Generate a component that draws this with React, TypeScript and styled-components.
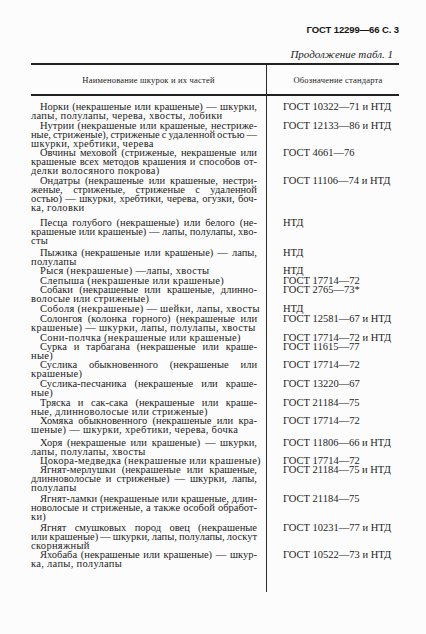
import styled, { createGlobalStyle } from "styled-components";

type Entry = { lines: string[]; code: string; gap: number };

// gap = extra space above the entry, taken from the scan
const entries: Entry[] = [
  {
    gap: 6,
    code: "ГОСТ 10322—71 и НТД",
    lines: ["Норки (некрашеные или крашеные) — шкурки,", "лапы, полулапы, черева, хвосты, лобики"],
  },
  {
    gap: 1,
    code: "ГОСТ 12133—86 и НТД",
    lines: [
      "Нутрии (некрашеные или крашеные, нестриже-",
      "ные, стриженые), стриженые с удаленной остью —",
      "шкурки, хребтики, черева",
    ],
  },
  {
    gap: 0,
    code: "ГОСТ 4661—76",
    lines: [
      "Овчины меховой (стриженые, некрашеные или",
      "крашеные всех методов крашения и способов от-",
      "делки волосяного покрова)",
    ],
  },
  {
    gap: 1,
    code: "ГОСТ 11106—74 и НТД",
    lines: [
      "Ондатры (некрашеные или крашеные, нестри-",
      "женые, стриженые, стриженые с удаленной",
      "остью) — шкурки, хребтики, черева, огузки, боч-",
      "ка, головки",
    ],
  },
  {
    gap: 6,
    code: "НТД",
    lines: [
      "Песца голубого (некрашеные) или белого (не-",
      "крашеные или крашеные) — лапы, полулапы, хво-",
      "сты",
    ],
  },
  {
    gap: 3,
    code: "НТД",
    lines: ["Пыжика (некрашеные или крашеные) — лапы,", "полулапы"],
  },
  { gap: 0, code: "НТД", lines: ["Рыся (некрашеные) —лапы, хвосты"] },
  { gap: 1, code: "ГОСТ 17714—72", lines: ["Слепыша (некрашеные или крашеные)"] },
  {
    gap: 0,
    code: "ГОСТ 2765—73*",
    lines: ["Собаки (некрашеные или крашеные, длинно-", "волосые или стриженые)"],
  },
  { gap: 1, code: "НТД", lines: ["Соболя (некрашеные) — шейки, лапы, хвосты"] },
  {
    gap: 1,
    code: "ГОСТ 12581—67 и НТД",
    lines: ["Солонгоя (колонка горного) (некрашеные или", "крашеные) — шкурки, лапы, полулапы, хвосты"],
  },
  { gap: 1, code: "ГОСТ 17714—72 и НТД", lines: ["Сони-полчка (некрашеные или крашеные)"] },
  {
    gap: 0,
    code: "ГОСТ 11615—77",
    lines: ["Сурка и тарбагана (некрашеные или краше-", "ные)"],
  },
  {
    gap: 0,
    code: "ГОСТ 17714—72",
    lines: ["Суслика обыкновенного (некрашеные или", "крашеные)"],
  },
  {
    gap: 1,
    code: "ГОСТ 13220—67",
    lines: ["Суслика-песчаника (некрашеные или краше-", "ные)"],
  },
  {
    gap: 1,
    code: "ГОСТ 21184—75",
    lines: ["Тряска и сак-сака (некрашеные или краше-", "ные, длинноволосые или стриженые)"],
  },
  {
    gap: 0,
    code: "ГОСТ 17714—72",
    lines: ["Хомяка обыкновенного (некрашеные или кра-", "шеные) — шкурки, хребтики, черева, бочка"],
  },
  {
    gap: 4,
    code: "ГОСТ 11806—66 и НТД",
    lines: ["Хоря (некрашеные или крашеные) — шкурки,", "лапы, полулапы, хвосты"],
  },
  { gap: 0, code: "ГОСТ 17714—72", lines: ["Цокора-медведка (некрашеные или крашеные)"] },
  {
    gap: 0,
    code: "ГОСТ 21184—75 и НТД",
    lines: [
      "Ягнят-мерлушки (некрашеные или крашеные,",
      "длинноволосые и стриженые) — шкурки, лапы,",
      "полулапы",
    ],
  },
  {
    gap: 2,
    code: "ГОСТ 21184—75",
    lines: [
      "Ягнят-ламки (некрашеные или крашеные, длин-",
      "новолосые и стриженые, а также особой обработ-",
      "ки)",
    ],
  },
  {
    gap: 2,
    code: "ГОСТ 10231—77 и НТД",
    lines: [
      "Ягнят смушковых пород овец (некрашеные",
      "или крашеные) — шкурки, лапы, полулапы, лоскут",
      "скорняжный",
    ],
  },
  {
    gap: 0,
    code: "ГОСТ 10522—73 и НТД",
    lines: ["Яхобаба (некрашеные или крашеные) — шкур-", "ка, лапы, полулапы"],
  },
];

export default function App() {
  return (
    <>
      <GlobalStyle />
      <Page>
        <RunningHead>ГОСТ 12299—66 С. 3</RunningHead>
        <Caption>Продолжение табл. 1</Caption>
        <Table>
          <HeadCell $first>Наименование шкурок и их частей</HeadCell>
          <HeadCell>Обозначение стандарта</HeadCell>
          {entries.map((entry, i) => (
            <Row key={i} $gap={entry.gap} $tail={i === entries.length - 1 ? 24 : 0}>
              <NameCell>
                {entry.lines.map((line, j) => (
                  <Line key={j} $lead={j === 0} $last={j === entry.lines.length - 1}>
                    {line}
                  </Line>
                ))}
              </NameCell>
              <CodeCell>{entry.code}</CodeCell>
            </Row>
          ))}
        </Table>
      </Page>
    </>
  );
}

const GlobalStyle = createGlobalStyle`
  html, body {
    margin: 0;
    background: #fcfcfc;
  }
  body {
    color: #1c1c1c;
    font-family: "Liberation Serif", "DejaVu Serif", serif;
  }
`;

const Page = styled.div`
  width: 426px;
  height: 634px;
  box-sizing: border-box;
  padding: 22px 27px 0 31px;
`;

const RunningHead = styled.div`
  text-align: right;
  font-family: "Liberation Sans", Arial, sans-serif;
  font-weight: 700;
  font-size: 9.5px;
  line-height: 16px;
  letter-spacing: -0.1px;
  color: #151515;
`;

const Caption = styled.div`
  margin-top: 9px;
  padding-right: 6px;
  text-align: right;
  font-style: italic;
  font-size: 11px;
  line-height: 14px;
`;

const Table = styled.div`
  margin-top: 2px;
  display: grid;
  grid-template-columns: 236px 1fr;
  border-top: 2px solid #222;
`;

const HeadCell = styled.div<{ $first?: boolean }>`
  height: 29px;
  display: flex;
  align-items: center;
  justify-content: center;
  padding-left: ${(p) => (p.$first ? "0" : "10px")};
  font-size: 8.5px;
  letter-spacing: 0.2px;
  border-bottom: 2px solid #222;
  border-right: ${(p) => (p.$first ? "1px solid #2a2a2a" : "none")};
`;

const Row = styled.div<{ $gap: number; $tail: number }>`
  display: contents;
  & > * {
    padding-top: ${(p) => p.$gap}px;
    padding-bottom: ${(p) => p.$tail}px;
  }
`;

const NameCell = styled.div`
  border-right: 1px solid #2a2a2a;
  padding-right: 9px;
  font-size: 10.5px;
  line-height: 9px;
`;

/* full lines are justified edge to edge; the closing line of an entry
   runs ragged but set a little looser, as the old type is wide */
const Line = styled.div<{ $lead: boolean; $last: boolean }>`
  height: 9px;
  white-space: nowrap;
  padding-left: ${(p) => (p.$lead ? "9px" : "0")};
  text-align: justify;
  text-align-last: ${(p) => (p.$last ? "left" : "justify")};
  letter-spacing: ${(p) => (p.$last ? "0.3px" : "0")};
  word-spacing: ${(p) => (p.$last ? "0" : "-1.5px")};
`;

const CodeCell = styled.div`
  padding-left: 16px;
  font-size: 10.5px;
  line-height: 9px;
  white-space: nowrap;
`;
